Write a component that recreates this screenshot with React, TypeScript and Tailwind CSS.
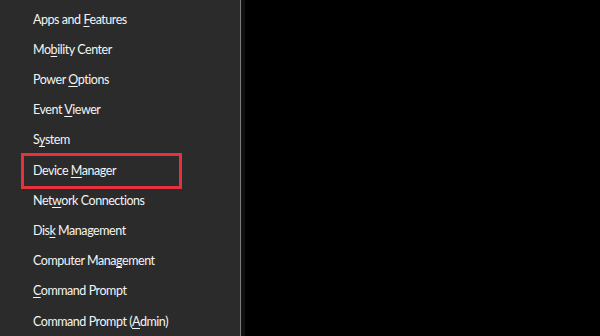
import React from "react";

type Item = { pre: string; key?: string; post?: string; boxed?: boolean };

const items: Item[] = [
  { pre: "Apps and ", key: "F", post: "eatures" },
  { pre: "Mo", key: "b", post: "ility Center" },
  { pre: "Power ", key: "O", post: "ptions" },
  { pre: "Event ", key: "V", post: "iewer" },
  { pre: "S", key: "y", post: "stem" },
  { pre: "Device ", key: "M", post: "anager", boxed: true },
  { pre: "Net", key: "w", post: "ork Connections" },
  { pre: "Dis", key: "k", post: " Management" },
  { pre: "Computer Mana", key: "g", post: "ement" },
  { pre: "", key: "C", post: "ommand Prompt" },
  { pre: "Command Prompt (", key: "A", post: "dmin)" },
];

export default function App() {
  return (
    <div className="w-[600px] h-[336px] bg-black flex overflow-hidden">
      <div className="w-[241px] h-full bg-[#2b2b2b] border-r border-[#7d7d7d] flex flex-col pt-[5px] shrink-0">
        {items.map((it, i) => (
          <div
            key={i}
            className="relative h-[30.2px] flex items-center pl-[33px] text-[12.5px] tracking-[-0.45px] text-[#f4f4f4] shrink-0"
            style={{ fontFamily: 'Lato, "Noto Sans", sans-serif' }}
          >
            {it.boxed && (
              <div className="absolute left-[21px] top-[-3px] w-[161px] h-[36px] border-[3px] border-[#e6323d]" />
            )}
            <span>
              {it.pre}
              {it.key && <span className="underline underline-offset-2">{it.key}</span>}
              {it.post}
            </span>
          </div>
        ))}
      </div>
      <div className="w-[4px] h-full bg-[#111]" />
      <div className="flex-1 bg-black" />
    </div>
  );
}
